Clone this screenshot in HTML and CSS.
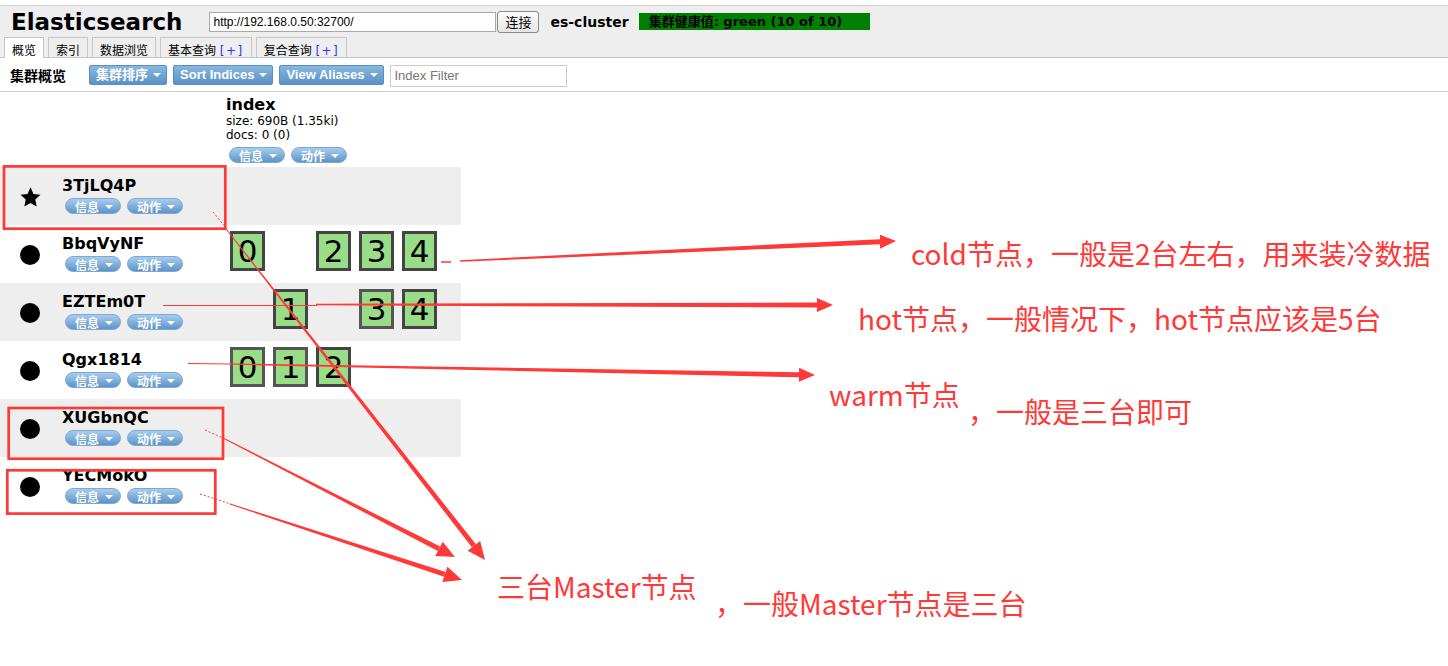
FILE: index.html
```html
<!DOCTYPE html>
<html lang="zh">
<head>
<meta charset="utf-8">
<title>Elasticsearch</title>
<link rel="stylesheet" href="styles.css">
</head>
<body>
<header class="header">
  <div class="header-top">
    <h1 class="title">Elasticsearch</h1>
    <input class="url" type="text" value="http://192.168.0.50:32700/">
    <button class="connect">连接</button>
    <span class="cluster-name">es-cluster</span>
    <span class="health">集群健康值: green (10 of 10)</span>
  </div>
  <nav class="tabs">
    <span class="tab active">概览</span>
    <span class="tab">索引</span>
    <span class="tab">数据浏览</span>
    <span class="tab">基本查询 <span class="plus">[+]</span></span>
    <span class="tab">复合查询 <span class="plus">[+]</span></span>
  </nav>
</header>

<div class="toolbar">
  <span class="toolbar-title">集群概览</span>
  <button class="tbtn">集群排序<i class="caret"></i></button>
  <button class="tbtn">Sort Indices<i class="caret"></i></button>
  <button class="tbtn">View Aliases<i class="caret"></i></button>
  <input class="filter" type="text" placeholder="Index Filter">
</div>

<main class="overview">
  <div class="index-head">
    <div class="index-name">index</div>
    <div class="meta">size: 690B (1.35ki)</div>
    <div class="meta">docs: 0 (0)</div>
    <div class="pills"><span class="pill">信息<i class="caret"></i></span><span class="pill">动作<i class="caret"></i></span></div>
  </div>

  <div class="node-row alt">
    <div class="node-cell">
      <div class="node-icon"><svg class="star" width="21" height="21" viewBox="0 0 21 21"><polygon points="10.5,0.3 13.44,6.95 20.49,7.76 15.26,12.55 16.67,19.49 10.5,15.9 4.33,19.49 5.74,12.55 0.51,7.76 7.56,6.95"/></svg></div>
      <div class="node-info"><div class="node-name">3TjLQ4P</div><div class="pills"><span class="pill">信息<i class="caret"></i></span><span class="pill">动作<i class="caret"></i></span></div></div>
    </div>
    <div class="shards"></div>
  </div>

  <div class="node-row">
    <div class="node-cell">
      <div class="node-icon"><span class="dot"></span></div>
      <div class="node-info"><div class="node-name">BbqVyNF</div><div class="pills"><span class="pill">信息<i class="caret"></i></span><span class="pill">动作<i class="caret"></i></span></div></div>
    </div>
    <div class="shards">
      <span class="shard">0</span><span class="shard empty"></span><span class="shard">2</span><span class="shard">3</span><span class="shard">4</span>
    </div>
  </div>

  <div class="node-row alt">
    <div class="node-cell">
      <div class="node-icon"><span class="dot"></span></div>
      <div class="node-info"><div class="node-name">EZTEm0T</div><div class="pills"><span class="pill">信息<i class="caret"></i></span><span class="pill">动作<i class="caret"></i></span></div></div>
    </div>
    <div class="shards">
      <span class="shard empty"></span><span class="shard">1</span><span class="shard empty"></span><span class="shard replica">3</span><span class="shard">4</span>
    </div>
  </div>

  <div class="node-row">
    <div class="node-cell">
      <div class="node-icon"><span class="dot"></span></div>
      <div class="node-info"><div class="node-name">Qgx1814</div><div class="pills"><span class="pill">信息<i class="caret"></i></span><span class="pill">动作<i class="caret"></i></span></div></div>
    </div>
    <div class="shards">
      <span class="shard replica">0</span><span class="shard replica">1</span><span class="shard">2</span>
    </div>
  </div>

  <div class="node-row alt">
    <div class="node-cell">
      <div class="node-icon"><span class="dot"></span></div>
      <div class="node-info"><div class="node-name">XUGbnQC</div><div class="pills"><span class="pill">信息<i class="caret"></i></span><span class="pill">动作<i class="caret"></i></span></div></div>
    </div>
    <div class="shards"></div>
  </div>

  <div class="node-row">
    <div class="node-cell">
      <div class="node-icon"><span class="dot"></span></div>
      <div class="node-info"><div class="node-name">YECMokO</div><div class="pills"><span class="pill">信息<i class="caret"></i></span><span class="pill">动作<i class="caret"></i></span></div></div>
    </div>
    <div class="shards"></div>
  </div>
</main>

<svg class="overlay" width="1448" height="666" viewBox="0 0 1448 666">
  <g fill="none" stroke="#ff3838" stroke-width="2.7">
    <rect x="4" y="166.4" width="221.3" height="62.3"/>
    <rect x="8.7" y="408" width="214.3" height="50.7"/>
    <rect x="7.3" y="470.3" width="208" height="43.3"/>
  </g>
  <g fill="none" stroke="#ff3838" stroke-width="1">
    <line x1="163" y1="305.5" x2="317" y2="305.5"/>
    <line x1="188" y1="363.5" x2="231" y2="364"/>
    <line x1="441" y1="262" x2="451" y2="262" stroke-width="1.5"/>
    <line x1="213" y1="212" x2="226" y2="228" stroke-dasharray="2 2"/>
    <line x1="205" y1="430" x2="226" y2="439.5" stroke-dasharray="2 2"/>
    <line x1="200" y1="494" x2="231" y2="504" stroke-dasharray="2 2"/>
  </g>
  <g fill="#ff3838">
    <polygon points="460,260.2 880,239.2 880,244.2 460,261.8"/>
    <polygon points="880,234.7 896,241 880,248.7"/>
    <polygon points="316,303.7 817,302.5 817,307.5 316,305.3"/>
    <polygon points="817,298 833,305 817,312"/>
    <polygon points="230,363.4 799,372.2 799,377.2 230,364.6"/>
    <polygon points="799.1,367.7 815,375 798.9,381.7"/>
    <polygon points="224.6,227.8 225.4,227.2 475.9,544.3 471.9,547.3"/>
    <polygon points="480.2,540.9 485,560 467.6,550.7"/>
    <polygon points="224.8,439.4 225.2,438.6 440.1,546.6 437.9,551"/>
    <polygon points="442.7,541.7 455,557 435.3,555.9"/>
    <polygon points="229.8,504.5 230.2,503.5 445.7,572 444.1,576.8"/>
    <polygon points="447.4,566.8 462,580 442.4,582"/>
  </g>
</svg>

<p class="note note-cold">cold节点，一般是2台左右，用来装冷数据</p>
<p class="note note-hot">hot节点，一般情况下，hot节点应该是5台</p>
<p class="note note-warm">warm节点</p>
<p class="note note-warm2">，一般是三台即可</p>
<p class="note note-master">三台Master节点</p>
<p class="note note-master2">，一般Master节点是三台</p>
</body>
</html>
```

FILE: styles.css
```css
* { box-sizing: border-box; }

html, body {
  margin: 0;
  padding: 0;
}

body {
  position: relative;
  width: 1448px;
  height: 666px;
  overflow: hidden;
  background: #fff;
  color: #000;
  font-family: "DejaVu Sans", Verdana, "Noto Sans CJK SC", sans-serif;
}

/* ---------- header ---------- */
.header {
  margin-top: 5px;
  border-top: 1px solid #d4d4d4;
  border-bottom: 1px solid #c6c6c6;
  background: #eee;
}

.header-top {
  height: 31px;
  display: flex;
  align-items: center;
  padding-left: 11px;
}

.title {
  margin: 0;
  font: bold 23px/28px "DejaVu Sans", sans-serif;
}

.url {
  margin: 0 0 0 27px;
  width: 287px;
  height: 20px;
  border: 1px solid #a9a9a9;
  padding: 0 3px;
  background: #fff;
  color: #000;
  font: 12px "Liberation Sans", Arial, sans-serif;
}

.connect {
  margin: 0 0 0 1px;
  width: 42px;
  height: 22px;
  padding: 0;
  border: 1px solid #8a8a8a;
  border-radius: 3px;
  background: linear-gradient(#fbfbfb, #e6e6e6);
  color: #000;
  font: 13px "Noto Sans CJK SC", sans-serif;
}

.cluster-name {
  margin-left: 11px;
  font: bold 14px "DejaVu Sans", sans-serif;
}

.health {
  margin-left: 10px;
  width: 231px;
  height: 17px;
  padding-left: 10px;
  background: #008000;
  color: #000;
  font: bold 13px/17px "DejaVu Sans", "Noto Sans CJK SC", sans-serif;
  white-space: nowrap;
}

.tabs {
  display: flex;
  align-items: flex-end;
  gap: 4px;
  height: 20px;
  padding-left: 4px;
}

.tab {
  height: 20px;
  padding: 3px 7px 0;
  border: 1px solid #c8c8c8;
  border-bottom: none;
  background: #eee;
  font: 12px/17px "Noto Sans CJK SC", sans-serif;
  white-space: nowrap;
}

.tab.active {
  height: 21px;
  margin-bottom: -1px;
  background: #fff;
  position: relative;
}

.plus {
  margin-left: 1px;
  letter-spacing: 1.5px;
  color: #3535ff;
  font-family: "DejaVu Sans", sans-serif;
}

/* ---------- toolbar ---------- */
.toolbar {
  height: 34px;
  display: flex;
  align-items: center;
  padding-left: 10px;
  border-bottom: 1px solid #cfcfcf;
}

.toolbar-title {
  width: 79px;
  font: bold 14px "Noto Sans CJK SC", sans-serif;
}

.tbtn {
  display: flex;
  align-items: center;
  height: 20px;
  margin: 0 6px 0 0;
  padding: 0 5px 0 6px;
  border: 1px solid #5a8dc0;
  border-radius: 2px;
  background: linear-gradient(#88b7e0, #5b92c7);
  color: #fff;
  font: bold 13px/18px "Liberation Sans", "Noto Sans CJK SC", sans-serif;
  white-space: nowrap;
}

.caret {
  display: inline-block;
  width: 0;
  height: 0;
  margin-left: 5px;
  border-left: 4px solid transparent;
  border-right: 4px solid transparent;
  border-top: 4px solid #fff;
}

.filter {
  margin: 2px 0 0 0;
  width: 177px;
  height: 22px;
  padding: 0 4px;
  border: 1px solid #cdcdcd;
  font: 13px "Liberation Sans", Arial, sans-serif;
  color: #000;
}

.filter::placeholder { color: #767676; }

/* ---------- overview ---------- */
.overview {
  width: 461px;
}

.index-head {
  padding: 4px 0 4px 226px;
}

.index-name {
  font: bold 16px/18px "DejaVu Sans", sans-serif;
}

.meta {
  font: 12px/14px "DejaVu Sans", sans-serif;
}

.index-head .pills {
  margin-top: 5px;
}

.pills {
  display: flex;
  gap: 6px;
  margin-left: 3px;
}

.pill {
  display: flex;
  align-items: center;
  height: 16px;
  padding: 1px 7px 0 9px;
  border: 1px solid #7ea8d1;
  border-radius: 8px;
  background: linear-gradient(#a8cdee, #5d94c8);
  color: #fff;
  font: bold 12px/14px "Noto Sans CJK SC", sans-serif;
  overflow: hidden;
  white-space: nowrap;
}

.pill .caret { margin-left: 6px; }

.node-row {
  display: flex;
  height: 58px;
}

.node-row.alt { background: #eee; }

.node-cell {
  display: flex;
  width: 230px;
}

.node-icon {
  width: 62px;
  padding: 20px 0 0 20px;
}

.star { display: block; fill: #000; }

.dot {
  display: block;
  width: 20px;
  height: 20px;
  border-radius: 50%;
  background: #000;
}

.node-info {
  padding-top: 10px;
}

.node-name {
  font: bold 16px/18px "DejaVu Sans", sans-serif;
}

.node-info .pills { margin-top: 3px; }

.shards {
  display: flex;
  gap: 8px;
  padding-top: 6px;
}

.shard {
  width: 35px;
  height: 40px;
  border: 3px solid #444;
  background: #99dd88;
  color: #000;
  text-align: center;
  font: 31px/35px "DejaVu Sans", sans-serif;
  overflow: visible;
}

.shard.replica { border-color: #555; }

.shard.empty { visibility: hidden; }

/* ---------- annotation overlay ---------- */
.overlay {
  position: absolute;
  left: 0;
  top: 0;
  pointer-events: none;
}

.note {
  position: absolute;
  margin: 0;
  color: #ff3838;
  font: 28px/40px "Noto Sans CJK SC", sans-serif;
  white-space: nowrap;
}

.note-cold { left: 911px; top: 233px; }
.note-hot { left: 858px; top: 298px; }
.note-warm { left: 829px; top: 374px; }
.note-warm2 { left: 968px; top: 391px; }
.note-master { left: 497px; top: 566px; }
.note-master2 { left: 715px; top: 583px; }
```
